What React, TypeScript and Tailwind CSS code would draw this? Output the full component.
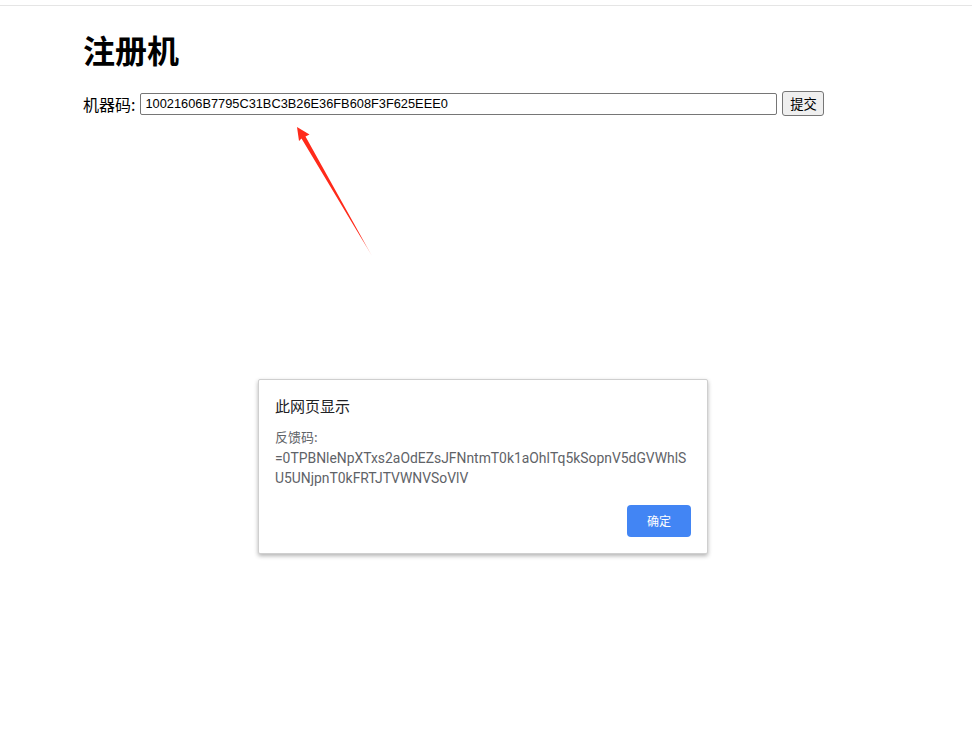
import React from "react";

export default function App() {
  return (
    <div className="relative w-[972px] h-[744px] bg-white overflow-hidden" style={{ fontFamily: '"Liberation Sans", "Noto Sans CJK SC", sans-serif' }}>
      <div className="h-[5px]" />
      <div className="border-t border-[#e5e5e5]" />
      <div className="pl-[83px]">
        <h1 className="mt-[23px] text-[32px] font-bold leading-[40px] text-black" style={{ fontFamily: '"Noto Sans CJK SC", sans-serif' }}>注册机</h1>
        <div className="mt-[22px] flex items-center h-[25px]">
          <span className="text-[16px] text-black leading-[20px]" style={{ fontFamily: '"Noto Sans CJK SC", sans-serif' }}>机器码:</span>
          <div className="ml-[5px] w-[637px] h-[22px] border border-[#767676] rounded-[2px] flex items-center pl-[4px] text-[12.8px] text-black">
            10021606B7795C31BC3B26E36FB608F3F625EEE0
          </div>
          <button className="ml-[5px] w-[42px] h-[25px] border border-[#767676] rounded-[3px] bg-[#efefef] text-[13.33px] text-black flex items-center justify-center" style={{ fontFamily: '"Noto Sans CJK SC", sans-serif' }}>
            提交
          </button>
        </div>
      </div>

      <svg className="absolute left-0 top-0" width="972" height="300" viewBox="0 0 972 300">
        <defs>
          <linearGradient id="fade" x1="297" y1="128" x2="372" y2="256" gradientUnits="userSpaceOnUse">
            <stop offset="0" stopColor="#ff2a1a" />
            <stop offset="0.85" stopColor="#ff2a1a" />
            <stop offset="1" stopColor="#ff2a1a" stopOpacity="0.3" />
          </linearGradient>
        </defs>
        <polygon points="297,127 309.5,134.5 305.5,136.5 372,256 301.5,138.5 299,141" fill="url(#fade)" />
      </svg>

      <div className="absolute left-[258px] top-[379px] w-[450px] h-[175px] bg-white border border-[#cfcfcf] rounded-[2px] shadow-[0_2px_4px_rgba(0,0,0,0.3)] px-[16px] pt-[16px]" style={{ fontFamily: '"Noto Sans CJK SC", "Roboto", sans-serif' }}>
        <div className="text-[15px] leading-[20px] text-[#202124]">此网页显示</div>
        <div className="mt-[11px] text-[13px] leading-[20.5px] text-[#5f6368]">
          <div>反馈码:</div>
          <div className="text-[13.9px]" style={{ fontFamily: '"Roboto", "Noto Sans CJK SC", sans-serif' }}>=0TPBNleNpXTxs2aOdEZsJFNntmT0k1aOhlTq5kSopnV5dGVWhlS</div>
          <div className="text-[13.9px]" style={{ fontFamily: '"Roboto", "Noto Sans CJK SC", sans-serif' }}>U5UNjpnT0kFRTJTVWNVSoVlV</div>
        </div>
        <div className="mt-[16px] flex justify-end">
          <button className="w-[64px] h-[32px] rounded-[4px] bg-[#4285f4] text-white text-[12px] flex items-center justify-center">确定</button>
        </div>
      </div>
    </div>
  );
}
